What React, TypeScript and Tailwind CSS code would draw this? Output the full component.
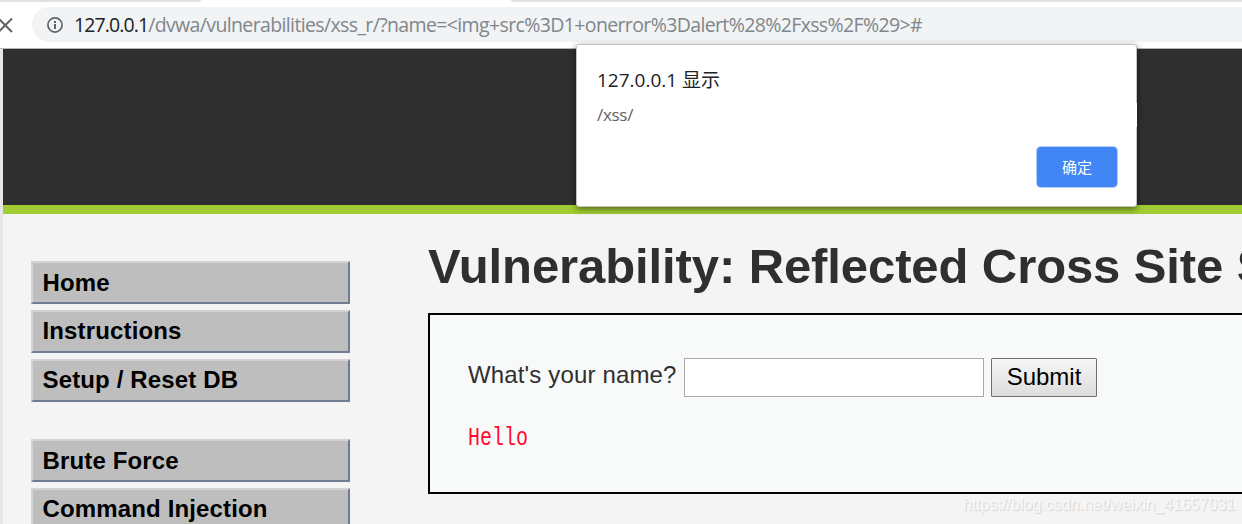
const primaryMenu = ["Home", "Instructions", "Setup / Reset DB"];
const attackMenu = ["Brute Force", "Command Injection"];

function MenuGroup({ items }: { items: string[] }) {
  return (
    <ul className="flex flex-col gap-1.5">
      {items.map((label) => (
        <li
          key={label}
          className="h-[43px] border-2 border-t-[#d3d3d3] border-l-[#d3d3d3] border-r-[#6f7c92] border-b-[#6f7c92] bg-[#bebebe] pl-[9.5px] text-2xl leading-[38px] font-bold tracking-[0.14px] whitespace-nowrap text-black first:leading-[40px]"
        >
          {label}
        </li>
      ))}
    </ul>
  );
}

function AddressBar() {
  return (
    <header className="flex h-[49px] flex-col border-b border-[#b3b6b4] bg-white font-['Open_Sans','Noto_Sans_CJK_SC',sans-serif]">
      <div className="flex h-0.5 justify-between">
        <div className="w-[201px] rounded-br-sm bg-[#dee1e6]" />
        <div className="w-[731px] rounded-bl-sm bg-[#dee1e6]" />
      </div>
      <div className="mt-[5px] flex h-[35px] items-center">
        <svg className="h-4 w-8 shrink-0" viewBox="0 0 32 16" fill="none" stroke="#5f6368" strokeWidth="2">
          <path d="M-1.5 1.5 12 15M12 1.5-1.5 15" />
        </svg>
        <div className="flex h-full flex-1 items-center rounded-l-full bg-[#f1f3f4] pl-[15px]">
          <svg className="mt-px size-4 shrink-0" viewBox="0 0 16 16">
            <circle cx="8" cy="8" r="7.1" fill="none" stroke="#5f6368" strokeWidth="1.7" />
            <path d="M7 7h2v5H7zM7 4h2v2H7z" fill="#5f6368" />
          </svg>
          <span className="ml-[11px] text-[19.5px] leading-[34px] tracking-[-0.63px] whitespace-nowrap text-[#80868b]">
            <span className="tracking-[-0.9px] text-[#202124]">127.0.0.1</span>
            {"/dvwa/vulnerabilities/xss_r/?name=<img+src%3D1+onerror%3Dalert%28%2Fxss%2F%29>#"}
          </span>
        </div>
      </div>
    </header>
  );
}

function AlertDialog() {
  return (
    <div
      role="dialog"
      className="absolute top-[44px] left-[576px] flex h-[163px] w-[561px] flex-col rounded-[3px] border border-[#c4c4c4] bg-white pt-5 pl-5 font-['Open_Sans','Noto_Sans_CJK_SC',sans-serif] shadow-[0_2px_6px_rgba(0,0,0,0.5)]"
    >
      <h2 className="h-[30px] text-[19px] leading-[30px] text-[#202124]">127.0.0.1 显示</h2>
      <p className="mt-2 -mr-px h-6 bg-white text-[17px] leading-[23px] tracking-[-0.3px] text-[#5f6368]">/xss/</p>
      <button className="mt-5 mr-[19px] h-10 w-[80px] self-end rounded-[4px] bg-[#4285f4] text-[15px] leading-10 text-white shadow-[0_0_0_1px_#b3cefb]">
        确定
      </button>
    </div>
  );
}

export default function App() {
  return (
    <div className="relative h-[524px] w-[1242px] overflow-hidden bg-[#f4f4f4] font-['Liberation_Sans',Arial,sans-serif]">
      <AddressBar />
      <div className="h-[475px] border-l-3 border-[#e7e7e7]">
        <div className="h-[165px] border-b-9 border-[#a1cc33] bg-[#2f2f2f]" />
        <div className="flex">
          <nav className="ml-7 flex w-[319px] shrink-0 flex-col gap-[37px] pt-[47px]">
            <MenuGroup items={primaryMenu} />
            <MenuGroup items={attackMenu} />
          </nav>
          <main className="ml-[78px] w-[1000px] shrink-0">
            <h1 className="mt-[24px] h-[56px] text-[49px] leading-[56px] font-bold tracking-[-0.1px] whitespace-nowrap text-[#2f2f2f]">
              Vulnerability: Reflected Cross Site Scripting (XSS)
            </h1>
            <section className="mt-[19px] h-[181px] border-2 border-black bg-[#f8faf9] pt-[43px] pl-[38px]">
              <form className="flex h-[39px] text-2xl" onSubmit={(e) => e.preventDefault()}>
                <label className="w-[216px] leading-[34px] tracking-[0.15px] whitespace-nowrap text-[#2f2f2f]" htmlFor="name">
                  What's your name?
                </label>
                <input id="name" className="w-[300px] border border-[#a9a9a9] bg-white px-2" />
                <button className="ml-[7px] w-[106px] rounded-[1px] border border-[#707070] bg-linear-to-b from-[#f6f6f6] to-[#dddddd] pb-0.5 leading-[35px] text-black">
                  Submit
                </button>
              </form>
              <pre className="mt-[27px] h-[30px] w-[75px] origin-left scale-x-80 font-['Liberation_Mono',monospace] text-[25px] leading-[30px] text-[#ff0a2e]">
                Hello
              </pre>
            </section>
          </main>
        </div>
      </div>
      <AlertDialog />
      <span className="absolute top-[495px] left-[963px] text-base leading-5 whitespace-nowrap text-[#f8f8f8] [text-shadow:1px_1px_1px_#d2d2d2]">
        https://blog.csdn.net/weixin_41657031
      </span>
    </div>
  );
}
